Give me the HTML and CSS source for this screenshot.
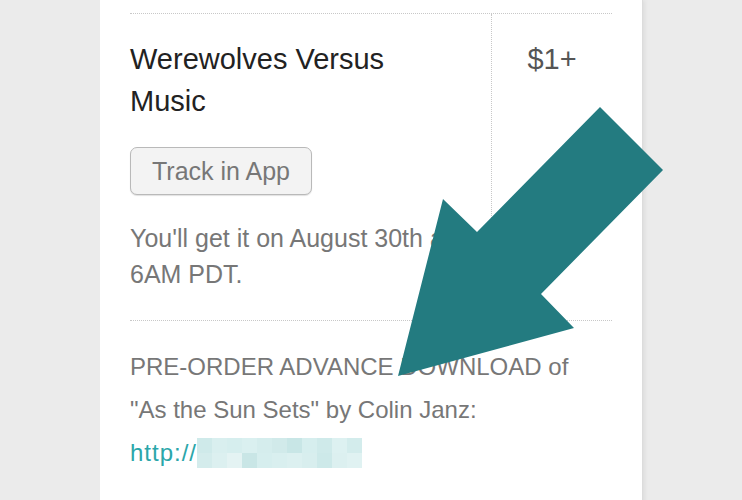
FILE: index.html
```html
<!DOCTYPE html>
<html lang="en">
<head>
    <meta charset="UTF-8">
    <meta name="viewport" content="width=device-width, initial-scale=1.0">
    <title>Order</title>
    <link rel="stylesheet" href="styles.css">
</head>
<body>

<div class="card">
    <div class="item">
        <div class="item-main">
            <h3 class="item-title">Werewolves Versus Music</h3>
            <button class="track-btn" type="button">Track in App</button>
            <p class="item-note">You'll get it on August 30th at 6AM PDT.</p>
        </div>
        <div class="item-price">$1+</div>
    </div>

    <p class="notes">
        PRE-ORDER ADVANCE DOWNLOAD of "As the Sun Sets" by Colin Janz:<br>
        <a class="link" href="#">http://<span class="blur"><i style="background:#cfeaea"></i><i style="background:#d9efef"></i><i style="background:#d6eeee"></i><i style="background:#daf0f0"></i><i style="background:#d5eded"></i><i style="background:#d1eaea"></i><i style="background:#c8e6e6"></i><i style="background:#d6eeee"></i><i style="background:#cfeaea"></i><i style="background:#ddf1f1"></i><i style="background:#d3ecec"></i><i style="background:#d4ecec"></i><i style="background:#dcf0f0"></i><i style="background:#e4f3f3"></i><i style="background:#c9e6e6"></i><i style="background:#d6eeee"></i><i style="background:#d9efef"></i><i style="background:#dcf0f0"></i><i style="background:#d8eeee"></i><i style="background:#cde9e9"></i><i style="background:#dcf0f0"></i><i style="background:#e0f2f2"></i></span></a>
    </p>
</div>

<!-- arrow drawn over the page -->
<svg class="arrow" width="742" height="500" viewBox="0 0 742 500">
    <polygon points="600,107 663,170 541,294 574,328 398,376 443,199 477,232" fill="#237b80"/>
</svg>

</body>
</html>
```

FILE: styles.css
```css
body {
    margin: 0;
    background-color: #ebebeb;
    font-family: "Liberation Sans", Arial, sans-serif;
    position: relative;
    height: 500px;
    overflow: hidden;
}
.card {
    margin-left: 100px;
    width: 482px;
    height: 500px;
    padding: 13px 30px 0 30px;
    background-color: #fff;
    box-shadow: 1px 0 0 #dcdcdc, 3px 0 4px rgba(0, 0, 0, 0.06);
}
.item {
    display: grid;
    grid-template-columns: 361px 1fr;
    border-top: 1px dotted #c8c8c8;
    border-bottom: 1px dotted #c8c8c8;
}
.item-main {
    padding-top: 24px;
    padding-bottom: 28px;
}
.item-title {
    margin: 0;
    font-size: 29px;
    font-weight: normal;
    line-height: 42px;
    color: #222;
    width: 300px;
}
.track-btn {
    margin-top: 25px;
    height: 48px;
    padding: 0 21px;
    font-family: inherit;
    font-size: 25px;
    color: #777;
    background-color: #f3f3f3;
    border: 1px solid #b9b9b9;
    border-radius: 7px;
    box-shadow: 0 1px 1px rgba(0, 0, 0, 0.12);
}
.item-note {
    margin: 25px 0 0 0;
    font-size: 25px;
    line-height: 36px;
    color: #777;
    width: 340px;
}
.item-price {
    border-left: 1px dotted #c8c8c8;
    text-align: center;
    padding-top: 24px;
    font-size: 29px;
    line-height: 42px;
    color: #555;
}
.notes {
    margin: 0;
    padding-top: 24px;
    font-size: 24px;
    line-height: 43px;
    color: #777;
    width: 460px;
}
.link {
    color: #2ba6aa;
    text-decoration: none;
    letter-spacing: 1px;
}
.blur {
    display: inline-grid;
    grid-template-columns: repeat(11, 15px);
    grid-auto-rows: 15px;
    vertical-align: 8px;
}
.blur i {
    display: block;
}
.arrow {
    position: absolute;
    top: 0;
    left: 0;
}
```
